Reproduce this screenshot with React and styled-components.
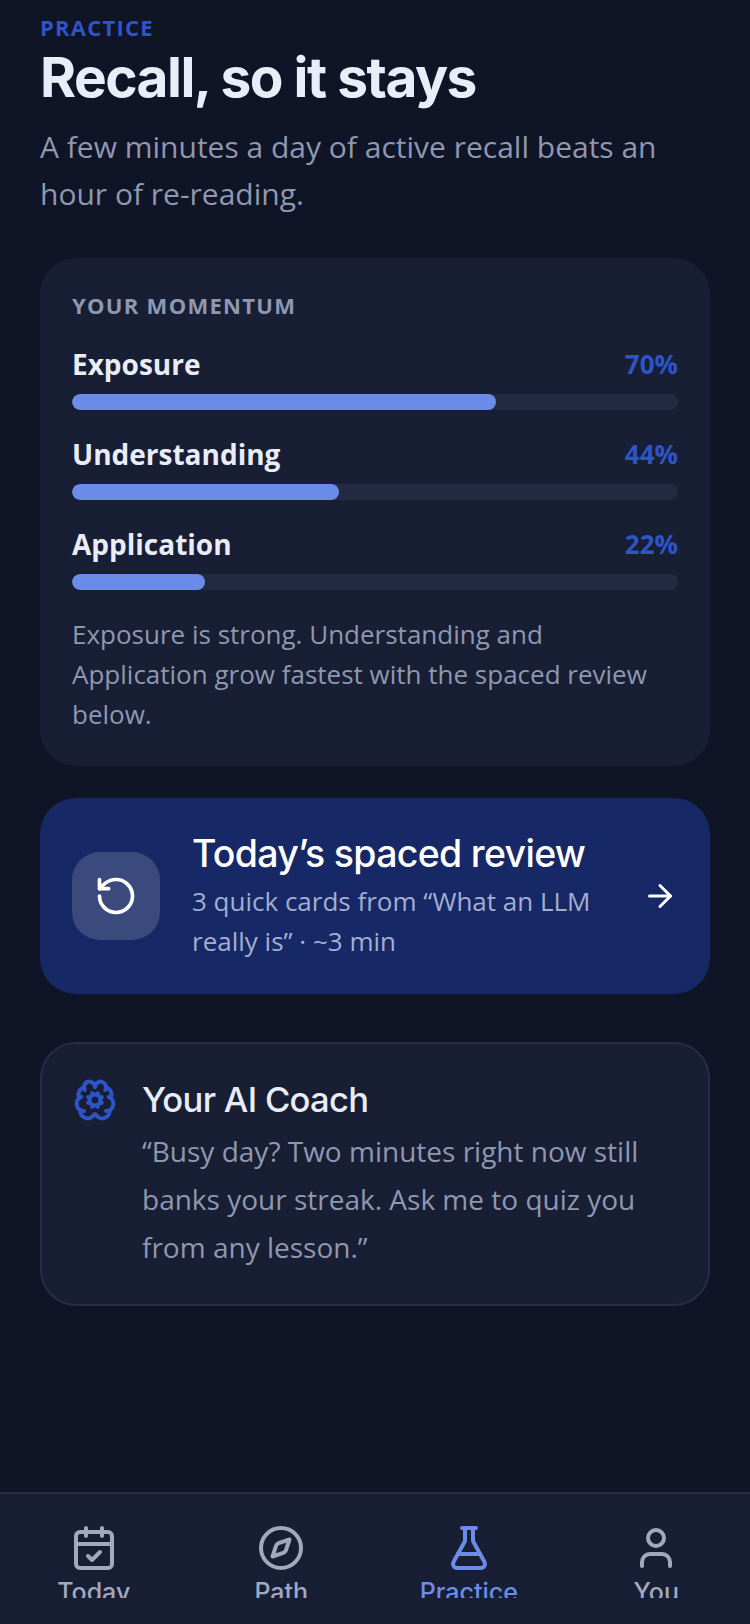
import styled, { createGlobalStyle } from "styled-components";
import {
  ArrowRight,
  BrainCog,
  CalendarCheck,
  Compass,
  FlaskConical,
  RotateCcw,
  User,
} from "lucide-react";

const GlobalStyle = createGlobalStyle`
  html, body {
    margin: 0;
    padding: 0;
    background: #0f1426;
  }
  * {
    box-sizing: border-box;
  }
`;

const momentum = [
  { label: "Exposure", value: 70 },
  { label: "Understanding", value: 44 },
  { label: "Application", value: 22 },
];

const tabs = [
  { label: "Today", icon: CalendarCheck },
  { label: "Path", icon: Compass },
  { label: "Practice", icon: FlaskConical, active: true },
  { label: "You", icon: User },
];

const App = () => {
  return (
    <>
      <GlobalStyle />
      <Page>
        <Main>
          <Eyebrow>PRACTICE</Eyebrow>
          <Title>Recall, so it stays</Title>
          <Subtitle>
            A few minutes a day of active recall beats an hour of re-reading.
          </Subtitle>

          <MomentumCard>
            <CardLabel>YOUR MOMENTUM</CardLabel>
            {momentum.map((item) => (
              <MeterRow key={item.label}>
                <MeterHead>
                  <MeterName>{item.label}</MeterName>
                  <MeterValue>{item.value}%</MeterValue>
                </MeterHead>
                <Track>
                  <Fill style={{ width: `${item.value}%` }} />
                </Track>
              </MeterRow>
            ))}
            <Note>
              Exposure is strong. Understanding and Application grow fastest
              with the spaced review below.
            </Note>
          </MomentumCard>

          <ReviewCard>
            <ReviewIcon>
              <RotateCcw size={44} strokeWidth={2} />
            </ReviewIcon>
            <ReviewText>
              <ReviewTitle>Today’s spaced review</ReviewTitle>
              <ReviewSub>3 quick cards from “What an LLM really is” · ~3 min</ReviewSub>
            </ReviewText>
            <ArrowRight size={36} strokeWidth={2} color="#fff" />
          </ReviewCard>

          <CoachCard>
            <CoachIcon>
              <BrainCog size={44} strokeWidth={2.2} />
            </CoachIcon>
            <div>
              <CoachTitle>Your AI Coach</CoachTitle>
              <CoachText>
                “Busy day? Two minutes right now still banks your streak. Ask me
                to quiz you from any lesson.”
              </CoachText>
            </div>
          </CoachCard>
        </Main>

        <TabBar>
          <TabRow>
            {tabs.map((tab) => (
              <Tab key={tab.label} $active={tab.active}>
                <tab.icon size={48} strokeWidth={2} />
                <TabLabel>{tab.label}</TabLabel>
              </Tab>
            ))}
          </TabRow>
        </TabBar>
      </Page>
    </>
  );
};

export default App;

const Page = styled.div`
  display: flex;
  flex-direction: column;
  width: 750px;
  height: 1624px;
  overflow: hidden;
  background: #0f1426;
  font-family: "Open Sans", "Noto Sans", sans-serif;
`;

const Main = styled.main`
  flex: 1;
  padding: 12px 40px 0;
`;

const Eyebrow = styled.div`
  font-size: 22px;
  line-height: 30px;
  font-weight: 700;
  letter-spacing: 1.25px;
  color: #2f54c8;
`;

const Title = styled.h1`
  margin: 2px 0 0;
  font-family: Inter, sans-serif;
  font-size: 55px;
  line-height: 66px;
  font-weight: 700;
  letter-spacing: -1.5px;
  color: #e9edf7;
`;

const Subtitle = styled.p`
  margin: 13px 0 0;
  font-size: 30px;
  line-height: 47px;
  color: #8f98b0;
`;

const MomentumCard = styled.section`
  margin-top: 41px;
  padding: 32px 32px 30px;
  height: 508px;
  border-radius: 36px;
  background: #181e34;
`;

const CardLabel = styled.div`
  font-size: 22px;
  line-height: 30px;
  font-weight: 700;
  letter-spacing: 1.3px;
  color: #8f98b0;
`;

const MeterRow = styled.div`
  margin-top: 23px;
  & + & {
    margin-top: 23px;
  }
`;

const MeterHead = styled.div`
  display: flex;
  justify-content: space-between;
  align-items: center;
  height: 42px;
`;

const MeterName = styled.span`
  font-size: 28px;
  font-weight: 700;
  color: #e9edf7;
`;

const MeterValue = styled.span`
  font-size: 26px;
  font-weight: 700;
  color: #2f54c8;
`;

const Track = styled.div`
  margin-top: 9px;
  height: 16px;
  border-radius: 8px;
  background: #232a42;
  overflow: hidden;
`;

const Fill = styled.div`
  height: 100%;
  border-radius: 8px;
  background: #6c8cea;
`;

const Note = styled.p`
  margin: 24px 0 0;
  font-size: 26px;
  line-height: 40px;
  color: #8f98b0;
`;

const ReviewCard = styled.section`
  display: flex;
  align-items: center;
  margin-top: 32px;
  padding: 0 32px;
  height: 196px;
  border-radius: 36px;
  background: #172866;
`;

const ReviewIcon = styled.div`
  flex: none;
  display: flex;
  align-items: center;
  justify-content: center;
  width: 88px;
  height: 88px;
  border-radius: 28px;
  background: #3a4a7c;
  color: #fff;
`;

const ReviewText = styled.div`
  flex: 1;
  margin: 0 32px;
`;

const ReviewTitle = styled.div`
  margin-bottom: 4px;
  font-family: Inter, sans-serif;
  font-size: 37.5px;
  line-height: 46px;
  font-weight: 500;
  letter-spacing: -0.7px;
  color: #fff;
`;

const ReviewSub = styled.div`
  font-size: 26px;
  line-height: 40px;
  color: #a3aed0;
`;

const CoachCard = styled.section`
  display: flex;
  gap: 25px;
  margin-top: 48px;
  padding: 31px 32px 0;
  height: 264px;
  border: 2px solid #262d45;
  border-radius: 36px;
  background: #181e34;
`;

const CoachIcon = styled.div`
  flex: none;
  margin: 3px 0 0 -1px;
  width: 44px;
  color: #2f54c8;
`;

const CoachTitle = styled.div`
  font-family: Inter, sans-serif;
  font-size: 34.6px;
  line-height: 48px;
  font-weight: 500;
  letter-spacing: -0.7px;
  color: #e9edf7;
`;

const CoachText = styled.p`
  margin: 4px 0 0;
  font-size: 28px;
  line-height: 48px;
  color: #8f98b0;
`;

const TabBar = styled.nav`
  flex: none;
  height: 132px;
  border-top: 2px solid #262d45;
  background: #181e34;
`;

const TabRow = styled.div`
  display: grid;
  grid-template-columns: repeat(4, 1fr);
  height: 104px;
  padding-top: 30px;
  overflow: hidden;
`;

const Tab = styled.div`
  display: flex;
  flex-direction: column;
  align-items: center;
  color: ${(props) => (props.$active ? "#6c8cea" : "#a0a9c0")};
`;

const TabLabel = styled.span`
  margin-top: 4px;
  font-family: Inter, sans-serif;
  font-size: 25px;
  line-height: 32px;
  font-weight: 500;
`;
